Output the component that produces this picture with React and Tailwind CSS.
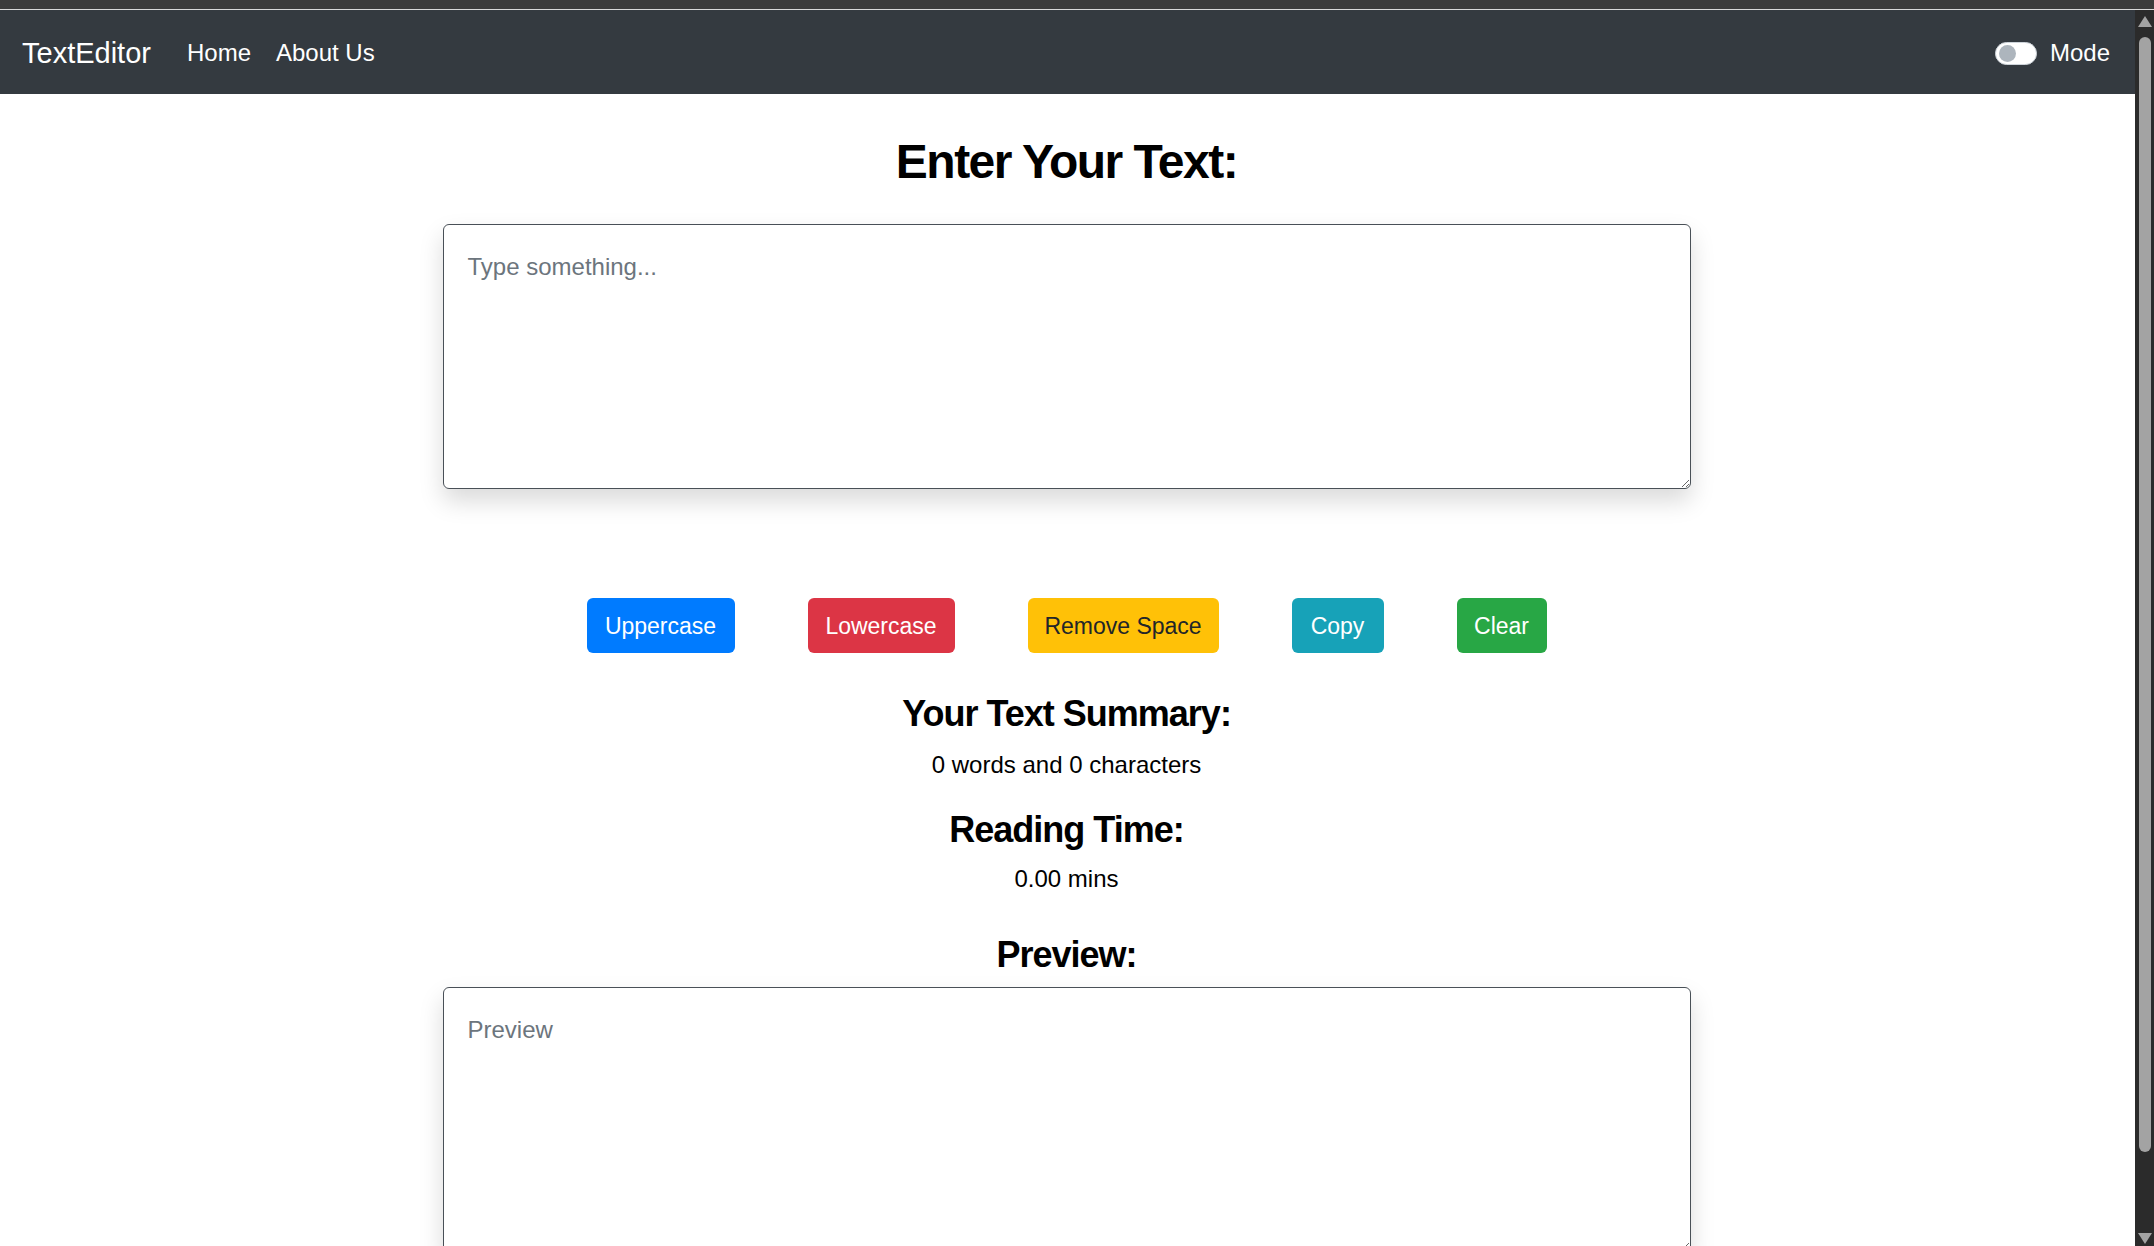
import React, { useState } from 'react';

const BUTTONS = [
  { label: 'Uppercase', cls: 'w-[148px] bg-[#007bff] text-white' },
  { label: 'Lowercase', cls: 'w-[147px] bg-[#dc3545] text-white' },
  { label: 'Remove Space', cls: 'w-[191px] bg-[#ffc107] text-[#212529]' },
  { label: 'Copy', cls: 'w-[92px] bg-[#17a2b8] text-white' },
  { label: 'Clear', cls: 'w-[90px] bg-[#28a745] text-white' },
];

const Navbar = () => (
  <nav className="h-[84px] shrink-0 bg-[#343a40] flex items-center pl-[22px] pr-[25px] pt-[2px]">
    <span className="text-[29px] leading-none text-white">TextEditor</span>
    <a className="ml-[36px] text-[24px] leading-none text-white">Home</a>
    <a className="ml-[25px] text-[24px] leading-none text-white">About Us</a>
    <div className="ml-auto flex items-center gap-[13px]">
      <div className="w-[42px] h-[23px] rounded-full bg-white border border-[#ced4da] flex items-center px-[3px]">
        <div className="w-[17px] h-[17px] rounded-full bg-[#adb5bd]" />
      </div>
      <span className="text-[24px] leading-none text-white">Mode</span>
    </div>
  </nav>
);

const Scrollbar = () => (
  <div className="w-[19px] shrink-0 bg-[#2b2b2b] flex flex-col items-center pt-[6px]">
    <svg width="14" height="11" viewBox="0 0 14 11"><path d="M7 0 L14 11 L0 11 Z" fill="#a3a3a3" /></svg>
    <div className="mt-[10px] w-[12px] h-[1115px] rounded-full bg-[#a3a3a3]" />
    <div className="flex-1" />
    <svg width="14" height="11" viewBox="0 0 14 11" className="mb-[2px]"><path d="M0 0 L14 0 L7 11 Z" fill="#a3a3a3" /></svg>
  </div>
);

export default function App() {
  const [text, setText] = useState('');
  const words = text.split(/\s+/).filter(Boolean).length;

  return (
    <div className="h-screen w-full overflow-hidden flex flex-col bg-[#3b3b3b] font-['Segoe_UI','Liberation_Sans',sans-serif]">
      <div className="h-[9px] shrink-0 bg-[#3b3b3b]" />
      <div className="h-px shrink-0 bg-[#d8d8d8]" />
      <div className="flex flex-1 min-h-0">
        <div className="flex-1 min-w-0 flex flex-col bg-white overflow-hidden">
          <Navbar />
          <main className="flex flex-col items-center text-[#000] pr-[2px]">
            <h1 className="mt-[39px] text-[48px] leading-[1.2] font-semibold tracking-[-1.5px]">Enter Your Text:</h1>
            <textarea
              value={text}
              onChange={(e) => setText(e.target.value)}
              placeholder="Type something..."
              className="mt-[33px] w-[1248px] h-[265px] shrink-0 p-[24px] text-[24px] leading-[1.5] border border-[#495057] rounded-[6px] shadow-[0_12px_24px_rgba(0,0,0,0.15)] placeholder:text-[#6c757d] outline-none"
            />
            <div className="mt-[109px] flex gap-[73px]">
              {BUTTONS.map((b) => (
                <button key={b.label} className={`h-[55px] flex items-center justify-center whitespace-nowrap rounded-[6px] text-[23px] leading-none pt-[2px] ${b.cls}`}>{b.label}</button>
              ))}
            </div>
            <h2 className="mt-[39px] text-[36px] leading-[1.2] font-semibold tracking-[-1px]">Your Text Summary:</h2>
            <p className="mt-[12px] text-[24px] leading-[1.5]">{words} words and {text.length} characters</p>
            <h2 className="mt-[25px] text-[36px] leading-[1.2] font-semibold tracking-[-1px]">Reading Time:</h2>
            <p className="mt-[10px] text-[24px] leading-[1.5]">{(0.008 * words).toFixed(2)} mins</p>
            <h2 className="mt-[36px] text-[36px] leading-[1.2] font-semibold tracking-[-1px]">Preview:</h2>
            <textarea
              readOnly
              value={text}
              placeholder="Preview"
              className="mt-[11px] w-[1248px] h-[265px] shrink-0 p-[24px] text-[24px] leading-[1.5] border border-[#495057] rounded-[6px] shadow-[0_12px_24px_rgba(0,0,0,0.15)] placeholder:text-[#6c757d] outline-none"
            />
          </main>
        </div>
        <Scrollbar />
      </div>
    </div>
  );
}
